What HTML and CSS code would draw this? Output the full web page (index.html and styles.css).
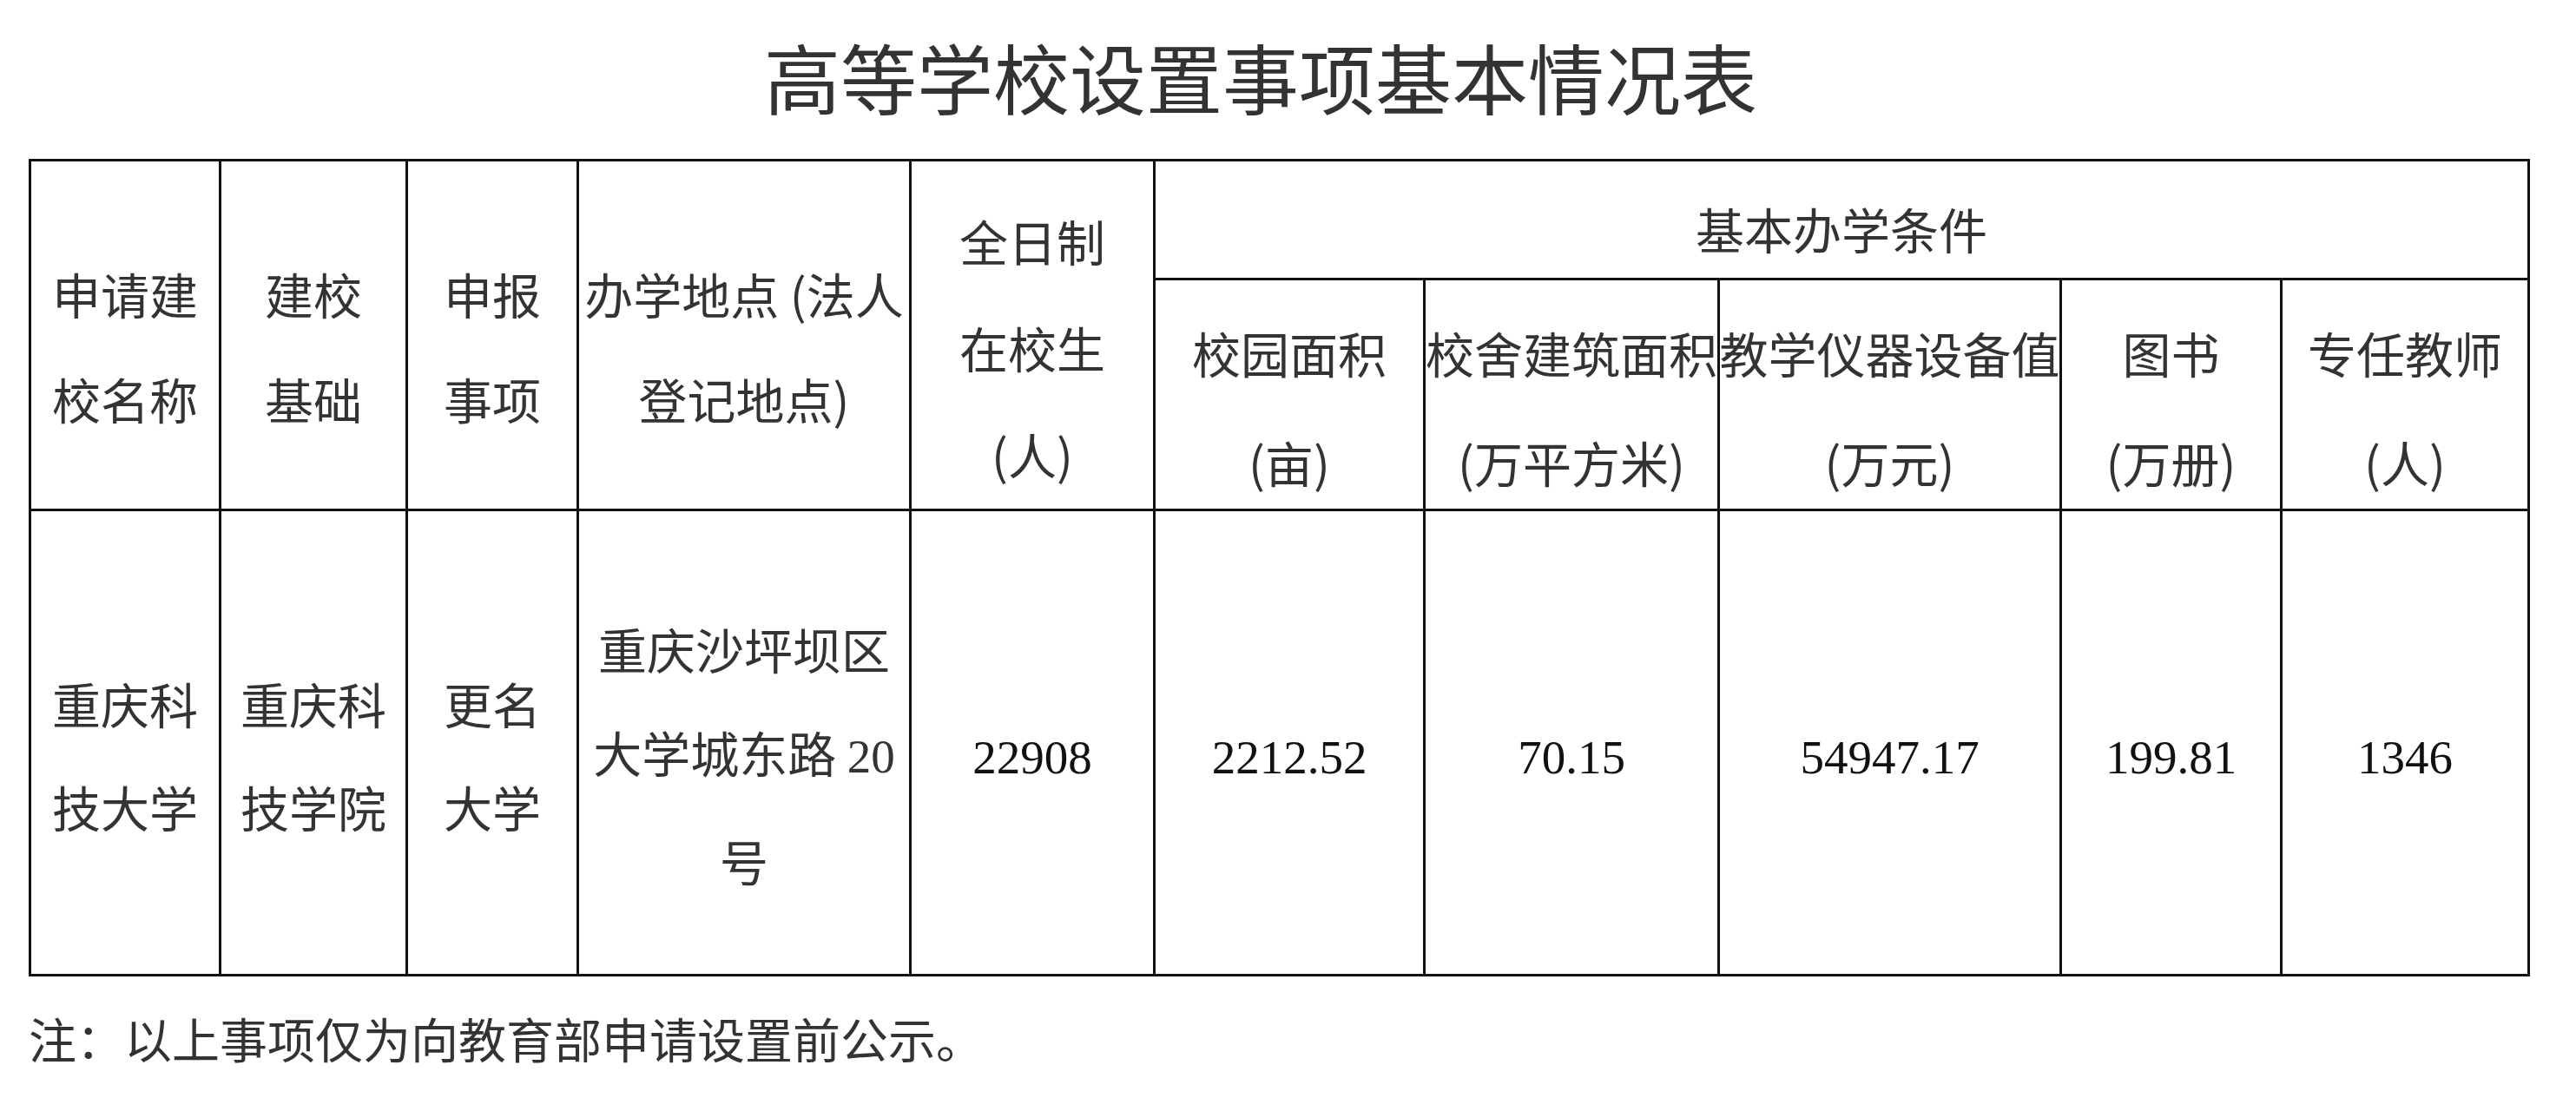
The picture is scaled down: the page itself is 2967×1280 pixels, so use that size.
FILE: index.html
```html
<!DOCTYPE html>
<html lang="zh-CN">
<head>
<meta charset="utf-8">
<title>高等学校设置事项基本情况表</title>
<link rel="stylesheet" href="styles.css">
</head>
<body>
<div class="page">
  <h1 class="title">高等学校设置事项基本情况表</h1>
  <div class="sheet">
    <div class="cell head tall"><div>申请建<br>校名称</div></div>
    <div class="cell head tall"><div>建校<br>基础</div></div>
    <div class="cell head tall"><div>申报<br>事项</div></div>
    <div class="cell head tall"><div>办学地点 (法人<br>登记地点)</div></div>
    <div class="cell head tall three"><div>全日制<br>在校生<br>(人)</div></div>
    <div class="cell group"><div>基本办学条件</div></div>
    <div class="cell sub"><div>校园面积<br>(亩)</div></div>
    <div class="cell sub"><div>校舍建筑面积<br>(万平方米)</div></div>
    <div class="cell sub"><div>教学仪器设备值<br>(万元)</div></div>
    <div class="cell sub"><div>图书<br>(万册)</div></div>
    <div class="cell sub"><div>专任教师<br>(人)</div></div>

    <div class="cell data"><div>重庆科<br>技大学</div></div>
    <div class="cell data"><div>重庆科<br>技学院</div></div>
    <div class="cell data"><div>更名<br>大学</div></div>
    <div class="cell data"><div>重庆沙坪坝区<br>大学城东路 <span class="digits">20</span><br>号</div></div>
    <div class="cell num"><div>22908</div></div>
    <div class="cell num"><div>2212.52</div></div>
    <div class="cell num"><div>70.15</div></div>
    <div class="cell num"><div>54947.17</div></div>
    <div class="cell num"><div>199.81</div></div>
    <div class="cell num"><div>1346</div></div>
  </div>
  <p class="note">注：以上事项仅为向教育部申请设置前公示。</p>
</div>
</body>
</html>
```

FILE: styles.css
```css
body {
  margin: 0;
  background: #ffffff;
  color: #333333;
  font-family: "Noto Sans CJK SC", "Liberation Sans", sans-serif;
}

.page {
  margin-left: 33px;
  width: 2881px;
}

.title {
  margin: 0;
  padding-top: 27px;
  padding-right: 43px;
  font-size: 88px;
  line-height: 120px;
  font-weight: normal;
  text-align: center;
  color: #333333;
}

.sheet {
  margin-top: 36px;
  display: grid;
  grid-template-columns: 216px 212px 194px 380px 278px 308px 336px 391px 251px 282px;
  grid-template-rows: 134px 263px 533px;
  gap: 3px;
  padding: 3px;
  background: #111111;
}

.cell {
  background: #ffffff;
  display: flex;
  align-items: center;
  justify-content: center;
  text-align: center;
  white-space: nowrap;
  font-size: 56px;
  min-width: 0;
  min-height: 0;
}

.tall {
  grid-row: span 2;
}

.head {
  line-height: 121px;
  padding-top: 23px;
}

.three {
  line-height: 123px;
  padding-top: 26px;
}

.group {
  grid-column: span 5;
  line-height: 80px;
  padding-top: 20px;
}

.sub {
  line-height: 126px;
  padding-top: 29px;
}

.data {
  line-height: 119px;
  padding-top: 26px;
}

.digits {
  font-family: "Liberation Serif", serif;
  font-size: 55px;
}

.num {
  font-family: "Liberation Serif", serif;
  font-size: 55px;
  line-height: 80px;
  padding-top: 35px;
  color: #111111;
}

.note {
  margin: 30px 0 0 0;
  font-size: 55px;
  line-height: 80px;
  color: #333333;
}
```
